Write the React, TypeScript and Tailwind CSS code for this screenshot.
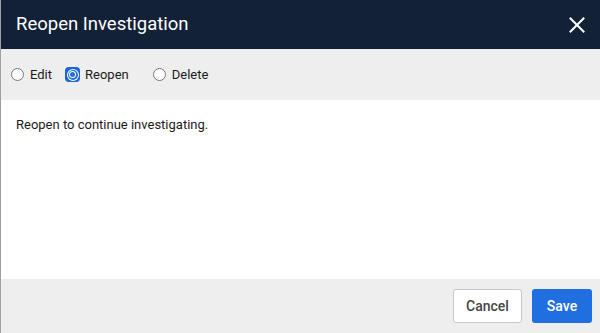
import React from "react";

function Radio({ checked }: { checked?: boolean }) {
  if (checked) {
    return (
      <span className="flex h-[15px] w-[15px] items-center justify-center rounded-[4px] bg-[#1a63dc]">
        <span className="flex h-[12px] w-[12px] items-center justify-center rounded-full bg-white">
          <span className="flex h-[10px] w-[10px] items-center justify-center rounded-full bg-[#1f6fe0]">
            <span className="flex h-[7px] w-[7px] items-center justify-center rounded-full bg-white">
              <span className="h-[5px] w-[5px] rounded-full bg-[#1f6fe0]" />
            </span>
          </span>
        </span>
      </span>
    );
  }
  return <span className="h-[13px] w-[13px] rounded-full border border-[#767676] bg-white" />;
}

export default function App() {
  return (
    <div
      className="flex h-[333px] w-[600px] flex-col overflow-hidden border-l border-[#9aa39f] bg-white"
      style={{ fontFamily: "Roboto, 'Liberation Sans', sans-serif" }}
    >
      <div className="flex h-[49px] shrink-0 items-center justify-between bg-[#132136] pl-[15px] pr-[15px]">
        <span className="text-[18.5px] text-white">Reopen Investigation</span>
        <svg width="16" height="16" viewBox="0 0 16 16">
          <path d="M1.5 1.5 L14.5 14.5 M14.5 1.5 L1.5 14.5" stroke="white" strokeWidth="2" strokeLinecap="square" />
        </svg>
      </div>
      <div className="flex h-[51px] shrink-0 items-center bg-[#eeeeee] pl-[10px] text-[13px] text-[#1b1b1b]">
        <label className="flex items-center gap-[6px]">
          <Radio />
          <span>Edit</span>
        </label>
        <label className="ml-[13px] flex items-center gap-[5px]">
          <Radio checked />
          <span>Reopen</span>
        </label>
        <label className="ml-[24px] flex items-center gap-[6px]">
          <Radio />
          <span>Delete</span>
        </label>
      </div>
      <div className="flex-1 bg-white pl-[15px] pt-[17px] text-[13px] leading-[16px] text-[#1b1b1b]">
        Reopen to continue investigating.
      </div>
      <div className="flex h-[54px] shrink-0 items-center justify-end gap-[10px] bg-[#eeeeee] pr-[8px]">
        <button className="h-[34px] w-[69px] rounded-[3px] border border-[#c8c8c8] bg-white text-[14px] font-medium text-[#454545]">
          Cancel
        </button>
        <button className="h-[34px] w-[60px] rounded-[3px] bg-[#1f6fe0] text-[14px] font-medium text-white">
          Save
        </button>
      </div>
    </div>
  );
}
